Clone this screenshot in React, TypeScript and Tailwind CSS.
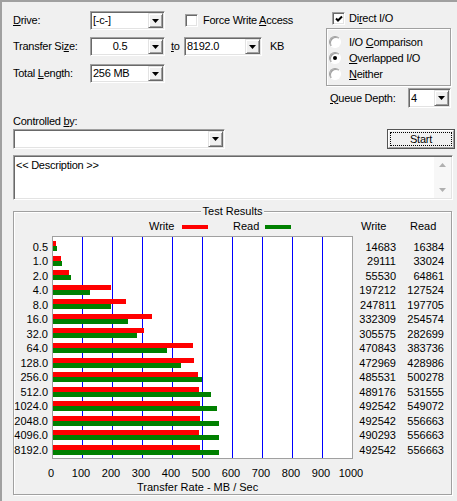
import React from 'react';

const sizes = ['0.5', '1.0', '2.0', '4.0', '8.0', '16.0', '32.0', '64.0', '128.0', '256.0', '512.0', '1024.0', '2048.0', '4096.0', '8192.0'];
const writes = [14683, 29111, 55530, 197212, 247811, 332309, 305575, 470843, 472969, 485531, 489176, 492542, 492542, 490293, 492542];
const reads = [16384, 33024, 64861, 127524, 197705, 254574, 282699, 383736, 428986, 500278, 531555, 549072, 556663, 556663, 556663];
const ticks = [0, 100, 200, 300, 400, 500, 600, 700, 800, 900, 1000];

const sunken =
  'border border-t-[#a0a0a0] border-l-[#a0a0a0] border-r-white border-b-white shadow-[inset_1px_1px_0_#696969,inset_-1px_-1px_0_#e3e3e3]';
const etched = 'border border-[#a0a0a0] shadow-[1px_1px_0_#fff,inset_1px_1px_0_#fff]';

function DropButton() {
  return (
    <div className="flex h-full w-[15px] shrink-0 items-center justify-center border border-t-[#e3e3e3] border-l-[#e3e3e3] border-r-[#696969] border-b-[#696969] bg-[#f0f0f0] shadow-[inset_1px_1px_0_#fff,inset_-1px_-1px_0_#a0a0a0]">
      <svg width="7" height="4" viewBox="0 0 7 4">
        <path d="M0 0h7L3.5 4z" fill="#000" />
      </svg>
    </div>
  );
}

function Combo({ className = '', text, center }: { className?: string; text: string; center?: boolean }) {
  return (
    <div className={`flex shrink-0 bg-white p-[1px] ${sunken} ${className}`}>
      <span className={`flex flex-1 items-center px-[1px] ${center ? 'justify-center' : ''}`}>{text}</span>
      <DropButton />
    </div>
  );
}

function Check({ checked, className = '' }: { checked?: boolean; className?: string }) {
  return (
    <div className={`flex h-[13px] w-[13px] shrink-0 items-center justify-center bg-white ${sunken} ${className}`}>
      {checked && (
        <svg width="8" height="8" viewBox="0 0 8 8">
          <path d="M1 3.5L3 5.5L7 1.5" stroke="#000" strokeWidth="2" fill="none" />
        </svg>
      )}
    </div>
  );
}

function Radio({ on }: { on?: boolean }) {
  return (
    <div className="flex h-[12px] w-[12px] shrink-0 items-center justify-center rounded-full border border-t-[#a0a0a0] border-l-[#a0a0a0] border-r-white border-b-white bg-white shadow-[inset_1px_1px_0_#a0a0a0]">
      {on && <div className="h-[4px] w-[4px] rounded-full bg-black" />}
    </div>
  );
}

function U({ children }: { children: React.ReactNode }) {
  return <span className="underline underline-offset-[1px]">{children}</span>;
}

function StartButton() {
  return (
    <div className="h-[20px] w-[68px] border border-[#555] p-0">
      <div className="h-full border border-t-white border-l-white border-r-[#a0a0a0] border-b-[#a0a0a0] bg-[#f0f0f0] p-[1px]">
        <div className="flex h-full items-center justify-center border border-dotted border-black">Start</div>
      </div>
    </div>
  );
}

function Chart() {
  return (
    <svg width="301" height="223" className="block shrink-0" shapeRendering="crispEdges">
      <rect x="0" y="0" width="301" height="223" fill="#fff" />
      {ticks.slice(1, 10).map((t, k) => (
        <rect key={t} x={30 * (k + 1)} y="0" width="1" height="223" fill="#0000ff" />
      ))}
      {writes.map((w, i) => {
        const y = Math.round(5 + 14.57 * i);
        return (
          <g key={i}>
            <rect x="1" y={y} width={Math.max(w * 0.0003 - 1, 1)} height="5" fill="#ff0000" />
            <rect x="1" y={y + 5} width={Math.max(reads[i] * 0.0003 - 1, 1)} height="5" fill="#008000" />
          </g>
        );
      })}
      <rect x="0.5" y="0.5" width="300" height="222" fill="none" stroke="#a0a0a0" />
    </svg>
  );
}

export default function App() {
  return (
    <div className="h-[501px] w-[457px] overflow-hidden border-l-2 border-t-2 border-[#a0a0a0] bg-[#f0f0f0] font-['Liberation_Sans',Arial,sans-serif] text-[11px] leading-[13px] text-black">
      <div className="flex h-[112px] pl-[11px] tracking-[-0.25px]">
        <div className="flex w-[313px] flex-col pt-[9px]">
          <div className="flex h-[19px] items-center">
            <span className="w-[77px]">
              <U>D</U>rive:
            </span>
            <Combo className="h-[19px] w-[75px]" text="[-c-]" />
            <Check className="ml-[20px]" />
            <span className="ml-[5px]">
              Force Write <U>A</U>ccess
            </span>
          </div>
          <div className="mt-[7px] flex h-[19px] items-center">
            <span className="w-[77px]">
              Transfer Si<U>z</U>e:
            </span>
            <Combo className="h-[19px] w-[75px]" text="0.5" center />
            <span className="ml-[6px] w-[13px]">
              <U>t</U>o
            </span>
            <Combo className="h-[19px] w-[78px]" text="8192.0" />
            <span className="ml-[8px]">KB</span>
          </div>
          <div className="mt-[8px] flex h-[19px] items-center">
            <span className="w-[77px]">
              Total <U>L</U>ength:
            </span>
            <Combo className="h-[19px] w-[75px]" text="256 MB" />
          </div>
        </div>
        <div className="flex w-[125px] flex-col">
          <div className="mt-[10px] flex h-[13px] items-center">
            <Check checked className="ml-[6px]" />
            <span className="ml-[4px]">
              Di<U>r</U>ect I/O
            </span>
          </div>
          <div className={`mt-[3px] flex h-[58px] flex-col pl-[2px] pt-[5px] ${etched}`}>
            <div className="flex h-[16px] items-center">
              <Radio />
              <span className="ml-[8px]">
                I/O <U>C</U>omparison
              </span>
            </div>
            <div className="flex h-[16px] items-center">
              <Radio on />
              <span className="ml-[8px]">
                <U>O</U>verlapped I/O
              </span>
            </div>
            <div className="flex h-[16px] items-center">
              <Radio />
              <span className="ml-[8px]">
                <U>N</U>either
              </span>
            </div>
          </div>
          <div className="mt-[2px] flex h-[20px] items-center">
            <span className="ml-[4px]">
              <U>Q</U>ueue Depth:
            </span>
            <Combo className="ml-auto h-[20px] w-[43px]" text="4" />
          </div>
        </div>
      </div>

      <div className="pl-[11px] pr-[2px]">
        <div className="h-[14px] leading-[14px] tracking-[-0.25px]">
          Controlled <U>b</U>y:
        </div>
        <div className="mt-[1px] flex items-start justify-between tracking-[-0.25px]">
          <Combo className="h-[20px] w-[212px]" text="" />
          <StartButton />
        </div>

        <div className={`mt-[6px] flex h-[45px] w-[440px] bg-white p-[1px] ${sunken}`}>
          <div className="flex-1 pl-[1px] pt-[2px] tracking-[-0.25px]">&lt;&lt; Description &gt;&gt;</div>
          <div className="flex w-[17px] flex-col justify-between bg-[#f7f7f7] py-[4px]">
            <div className="flex justify-center pt-[2px]">
              <svg width="7" height="4" viewBox="0 0 7 4">
                <path d="M0 4h7L3.5 0z" fill="#b0b0b0" />
              </svg>
            </div>
            <div className="flex justify-center pb-[2px]">
              <svg width="7" height="4" viewBox="0 0 7 4">
                <path d="M0 0h7L3.5 4z" fill="#b0b0b0" />
              </svg>
            </div>
          </div>
        </div>

        <div className={`relative mt-[11px] h-[284px] w-[439px] ${etched}`}>
          <div className="absolute left-1/2 top-[-8px] -translate-x-1/2 bg-[#f0f0f0] px-[2px] leading-[14px]">
            Test Results
          </div>

          <div className="flex h-[24px] items-center pt-[5px]">
            <span className="ml-[135px] w-[33px]">Write</span>
            <span className="h-[4px] w-[26px] bg-[#ff0000]" />
            <span className="ml-[25px] w-[32px]">Read</span>
            <span className="h-[4px] w-[26px] bg-[#008000]" />
            <span className="ml-[70px] w-[49px]">Write</span>
            <span>Read</span>
          </div>

          <div className="flex items-start">
            <div className="w-[34px] pt-[3.5px] text-right">
              {sizes.map((s) => (
                <div key={s} className="h-[14.5px] leading-[14.5px]">
                  {s}
                </div>
              ))}
            </div>
            <div className="ml-[4px]">
              <Chart />
            </div>
            <div className="w-[43px] pt-[3.5px] text-right">
              {writes.map((v, i) => (
                <div key={i} className="h-[14.5px] leading-[14.5px]">
                  {v}
                </div>
              ))}
            </div>
            <div className="w-[48px] pt-[3.5px] text-right">
              {reads.map((v, i) => (
                <div key={i} className="h-[14.5px] leading-[14.5px]">
                  {v}
                </div>
              ))}
            </div>
          </div>

          <div className="ml-[22px] flex pt-[7px] leading-[15px]">
            {ticks.map((t) => (
              <div key={t} className="w-[30px] text-center">
                {t}
              </div>
            ))}
          </div>
          <div className="ml-[123px] leading-[13px]">Transfer Rate - MB / Sec</div>
        </div>
      </div>
    </div>
  );
}
